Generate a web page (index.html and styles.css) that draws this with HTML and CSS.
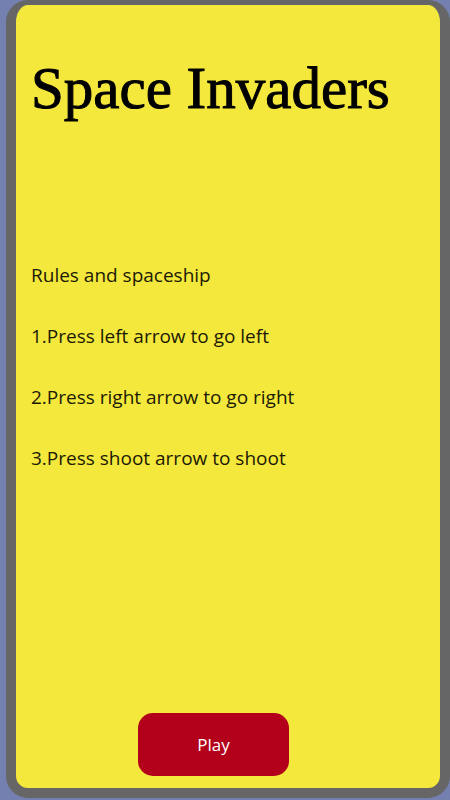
FILE: index.html
```html
<!DOCTYPE html>
<html lang="en">
  <head>
    <meta charset="UTF-8" />
    <title>Space Invaders</title>
    <link rel="stylesheet" href="styles.css">
  </head>
  <body>
    <div class="card">
      <h1 class="title">Space Invaders</h1>
      <div class="rules">
        <p>Rules and spaceship</p>
        <p>1.Press left arrow to go left</p>
        <p>2.Press right arrow to go right</p>
        <p>3.Press shoot arrow to shoot</p>
      </div>
      <button class="play">Play</button>
    </div>
  </body>
</html>
```
FILE: styles.css
```css
html,
body {
  height: 100%;
}
body {
  margin: 0;
  padding: 0 0 2px 6px;
  box-sizing: border-box;
  background: #7480b0;
  font-family: "Open Sans", sans-serif;
}
.card {
  box-sizing: border-box;
  height: 100%;
  background: #f4e83c;
  border: 10px solid #666;
  border-top-width: 5px;
  border-radius: 22px;
  padding: 0 15px;
  display: flex;
  flex-direction: column;
}
.title {
  font-family: "Liberation Serif", serif;
  font-size: 59px;
  font-weight: normal;
  -webkit-text-stroke: 1px #000;
  color: #000;
  margin: 48px 0 0;
  line-height: 1.2;
}
.rules {
  margin-top: 138px;
}
.rules p {
  margin: 0 0 35px;
  font-size: 19px;
  line-height: 26px;
  color: #1c1a05;
}
.play {
  margin: auto 0 12px 107px;
  width: 151px;
  height: 63px;
  border: none;
  border-radius: 15px;
  background: #b3001b;
  color: #fff;
  font-family: "Open Sans", sans-serif;
  font-size: 17px;
  cursor: pointer;
}
```
